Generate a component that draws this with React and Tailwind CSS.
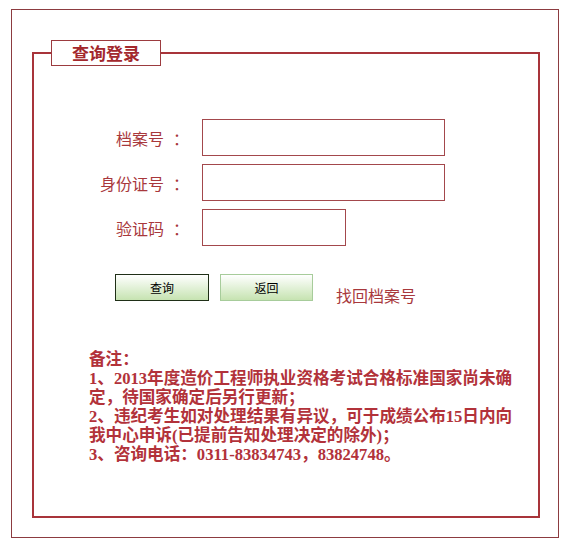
import React from "react";

const cjk = { fontFamily: '"Noto Sans CJK SC", "Liberation Sans", sans-serif' };
const notesFont = { fontFamily: '"Liberation Serif", "Noto Sans CJK SC", serif' };

const FormRow = ({ label, inputClass }) => (
  <div className="flex items-center">
    <label className="w-[140px] text-right text-[16px] leading-[20px] text-[#a8383c] whitespace-nowrap">
      {label}
      <span className="ml-[9px]">：</span>
    </label>
    <input
      type="text"
      className={`ml-[13px] h-[37px] border border-[#a3484c] bg-white outline-none ${inputClass}`}
    />
  </div>
);

export default function App() {
  return (
    <div className="w-[574px] h-[544px] bg-white pt-[9px] pl-[11px]" style={cjk}>
      <div className="w-[548px] h-[529px] border border-[#8c3b40] pt-[30px] pl-[20px]">
        <fieldset className="w-[508px] h-[478px] border-2 border-[#a8343a] pl-[15px]">
          <legend className="mx-[2px] h-[26px] border border-[#9c3b3f] text-left">
            <span className="block w-[108px] text-center text-[17px] font-bold leading-[24px] text-[#a3282d]">
              查询登录
            </span>
          </legend>

          <div className="mt-[53px] flex flex-col gap-[8px]">
            <FormRow label="档案号" inputClass="w-[243px]" />
            <FormRow label="身份证号" inputClass="w-[243px]" />
            <FormRow label="验证码" inputClass="w-[144px]" />
          </div>

          <div className="mt-[28px] ml-[66px] flex items-start">
            <button className="w-[94px] h-[27px] border border-[#1f2f17] bg-gradient-to-b from-white to-[#c6e3b1] text-[12px] text-black">
              查询
            </button>
            <button className="ml-[11px] w-[93px] h-[27px] border border-[#a7cc9b] bg-gradient-to-b from-white to-[#c6e3b1] text-[12px] text-black">
              返回
            </button>
            <span className="ml-[23px] mt-[11px] text-[16px] leading-[20px] text-[#a8383c]">找回档案号</span>
          </div>

          <div
            className="mt-[45px] ml-[40px] text-[16.6px] font-bold leading-[19px] text-[#b2323a] whitespace-nowrap"
            style={notesFont}
          >
            <div>备注：</div>
            <div>1、2013年度造价工程师执业资格考试合格标准国家尚未确</div>
            <div>定，待国家确定后另行更新；</div>
            <div>2、违纪考生如对处理结果有异议，可于成绩公布15日内向</div>
            <div>我中心申诉(已提前告知处理决定的除外)；</div>
            <div>3、咨询电话：0311-83834743，83824748。</div>
          </div>
        </fieldset>
      </div>
    </div>
  );
}
